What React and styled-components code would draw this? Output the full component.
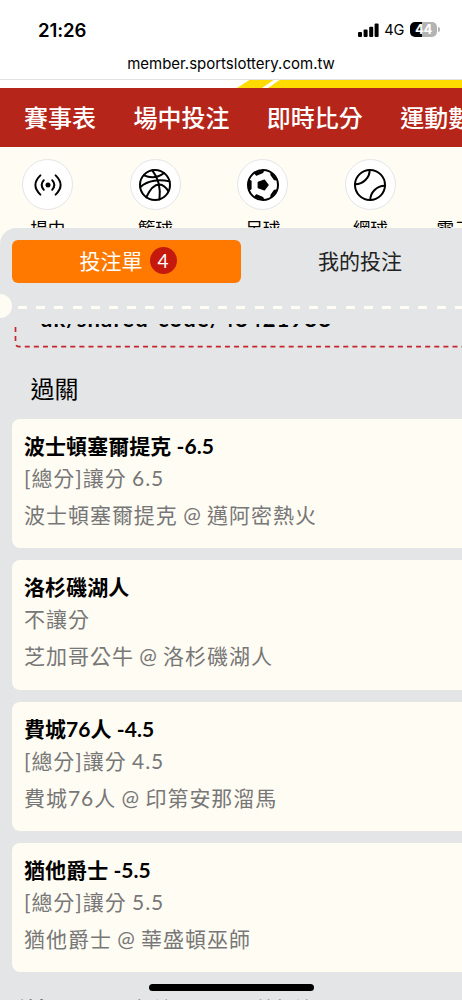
import React from 'react';
import styled, { createGlobalStyle } from 'styled-components';

const GlobalStyle = createGlobalStyle`
  * {
    box-sizing: border-box;
  }
  body {
    margin: 0;
    overflow: hidden;
    background: #fff;
  }
`;

const Screen = styled.div`
  display: flex;
  flex-direction: column;
  position: relative;
  width: 462px;
  height: 1000px;
  overflow: hidden;
  background: #fffcf3;
  color: #000;
  font-family: Lato, 'Noto Sans CJK TC', sans-serif;
  white-space: nowrap;
`;

const StatusBar = styled.header`
  display: flex;
  justify-content: space-between;
  align-items: center;
  flex: none;
  height: 52px;
  padding: 7px 22px 0 38px;
  background: #fff;
  font-family: Inter, sans-serif;
`;

const Clock = styled.span`
  font-size: 18.6px;
  font-weight: 600;
  letter-spacing: -0.1px;
`;

const StatusIcons = styled.div`
  display: flex;
  align-items: center;
  gap: 5.5px;
  font-size: 14.6px;
`;

const Battery = styled.div`
  display: flex;
  align-items: center;
  gap: 1px;
`;

const BatteryBody = styled.span`
  width: 27px;
  height: 15px;
  border-radius: 5px;
  background: linear-gradient(90deg, #000 44%, #b3b3b3 44%);
  color: #fff;
  font-size: 13px;
  font-weight: 700;
  letter-spacing: -0.3px;
  line-height: 15px;
  text-align: center;
`;

const BatteryTip = styled.span`
  width: 2px;
  height: 5px;
  border-radius: 0 2px 2px 0;
  background: #b3b3b3;
`;

const AddressBar = styled.div`
  flex: none;
  height: 28px;
  border-bottom: 1px solid #e2e2e2;
  background: #fff;
  font-family: Inter, sans-serif;
  font-size: 15px;
  line-height: 23px;
  text-align: center;
`;

const Stripe = styled.svg`
  display: block;
  flex: none;
  background: #fff;
`;

const NavBar = styled.nav`
  display: flex;
  align-items: center;
  gap: 37.4px;
  flex: none;
  height: 59px;
  padding: 0 0 3px 24px;
  background: #b6251a;
  color: #fff;
  font-size: 24px;
  font-weight: 500;
`;

const NavItem = styled.span`
  flex: none;
`;

const Sports = styled.div`
  display: flex;
  flex: none;
  height: 81px;
  padding-top: 11px;
  border-top: 1px solid #fff;
  overflow: hidden;
`;

const Sport = styled.div`
  display: flex;
  flex-direction: column;
  align-items: center;
  flex: none;
  width: 107.5px;
  margin-left: ${({ $shift = 0 }) => $shift}px;
`;

const SportIcon = styled.span`
  display: flex;
  justify-content: center;
  align-items: center;
  flex: none;
  width: 51px;
  height: 51px;
  border: 1.5px solid ${({ $empty }) => ($empty ? 'transparent' : '#e4e5e8')};
  border-radius: 50%;
  background: ${({ $empty }) => ($empty ? 'transparent' : '#fff')};
`;

const SportName = styled.span`
  margin-top: 4.5px;
  font-size: 17.6px;
  line-height: 27px;
`;

const Sheet = styled.section`
  display: flex;
  flex-direction: column;
  flex: 1;
  min-height: 0;
  overflow: hidden;
  border-radius: 16px 0 0 0;
  background: #e4e5e7;
`;

const Tabs = styled.div`
  display: flex;
  align-items: center;
  flex: none;
  height: 66px;
  padding-left: 12px;
`;

const Tab = styled.div`
  display: flex;
  justify-content: center;
  align-items: center;
  gap: 7px;
  flex: none;
  width: ${({ $active }) => ($active ? '229px' : '238px')};
  height: 43px;
  padding: ${({ $active }) => ($active ? '0 0 2px 3px' : '0 0 3px')};
  border-radius: 6px;
  background: ${({ $active }) => ($active ? '#ff7900' : 'transparent')};
  color: ${({ $active }) => ($active ? '#fff' : '#222')};
  font-size: 21px;
`;

const Badge = styled.span`
  width: 27px;
  height: 27px;
  border-radius: 50%;
  background: #c5190d;
  font-size: 19px;
  line-height: 27px;
  text-align: center;
`;

const Perforation = styled.div`
  display: flex;
  align-items: center;
  gap: 6px;
  flex: none;
  height: 24px;
`;

const Notch = styled.span`
  width: 12px;
  height: 24px;
  border-radius: 0 12px 12px 0;
  background: #fffcf3;
`;

const DashLine = styled.span`
  flex: 1;
  height: 3px;
  margin-top: 3px;
  background: repeating-linear-gradient(90deg, #fffcf3 0 9px, transparent 9px 18.2px);
`;

const ShareClip = styled.div`
  display: flex;
  align-items: flex-end;
  flex: none;
  height: 25px;
  margin: 6px 0 0 14px;
  overflow: hidden;
`;

const ShareBox = styled.div`
  position: relative;
  flex: none;
  width: 470px;
  height: 60px;
  padding: 18px 0 0 26px;
  font-size: 22px;
  font-weight: 700;
  letter-spacing: 1.1px;
  line-height: 24px;
`;

const DashedFrame = styled.svg`
  position: absolute;
  inset: 0;
`;

const SectionTitle = styled.h2`
  flex: none;
  height: 70px;
  margin: 0;
  padding: 5px 0 0 30.5px;
  font-size: 24px;
  font-weight: 400;
  line-height: 70px;
`;

const Bets = styled.div`
  display: flex;
  flex-direction: column;
  gap: 12px;
  flex: none;
  padding-left: 12px;
`;

const BetCard = styled.article`
  height: 129.3px;
  padding: 11px 12px;
  border-radius: 8px 0 0 8px;
  background: #fffcf3;
`;

const BetTitle = styled.div`
  height: 32px;
  font-size: 21px;
  font-weight: 700;
  letter-spacing: 0.06px;
  line-height: 32px;
`;

const BetLine = styled.div`
  height: ${({ $tall }) => ($tall ? '40px' : '33px')};
  color: #777;
  font-size: 21px;
  letter-spacing: 0.97px;
  line-height: ${({ $tall }) => ($tall ? '40px' : '32px')};
  word-spacing: -1px;
`;

const Summary = styled.div`
  display: flex;
  gap: 43px;
  flex: none;
  margin-top: 22px;
  padding-left: 14px;
  font-size: 19.5px;
  line-height: 30px;
`;

const SummaryTab = styled.span`
  color: ${({ $active }) => ($active ? '#222' : '#777')};
  font-weight: ${({ $active }) => ($active ? 700 : 400)};
`;

const HomeIndicator = styled.div`
  position: absolute;
  left: 149px;
  bottom: 9px;
  width: 165px;
  height: 7px;
  border-radius: 4px;
  background: #000;
`;

const SignalIcon = () => (
  <svg width='21' height='14' viewBox='0 0 21 14'>
    <rect x='0' y='9' width='4' height='5' rx='1' />
    <rect x='5.6' y='6.6' width='4' height='7.4' rx='1' />
    <rect x='11.2' y='3.8' width='4' height='10.2' rx='1' />
    <rect x='16.6' y='0.5' width='4' height='13.5' rx='1' />
  </svg>
);

const iconProps = {
  width: 34,
  height: 34,
  viewBox: '0 0 34 34',
  fill: 'none',
  stroke: '#000',
  strokeWidth: 2,
  strokeLinecap: 'round',
};

const LiveIcon = () => (
  <svg {...iconProps}>
    <circle cx='17' cy='17' r='2.5' fill='#000' stroke='none' />
    <path d='M12.8 12.2Q8.6 17 12.8 21.8M21.2 12.2Q25.4 17 21.2 21.8' />
    <path d='M9.4 7.4Q-.6 17 9.4 26.6M24.6 7.4Q34.6 17 24.6 26.6' />
  </svg>
);

const BasketballIcon = () => (
  <svg {...iconProps}>
    <circle cx='17' cy='17' r='15' />
    <path d='M14.3 2.3Q23.5 14 21.5 31.4' />
    <path d='M6 7.4Q16.5 12.2 26.2 5' />
    <path d='M2.4 19C10 12 22 11.2 31.5 13.4' />
    <path d='M8.2 29.4C11.5 22 16 16.4 21.4 16.4Q26.5 16.8 30.2 23' />
  </svg>
);

const SoccerIcon = () => (
  <svg {...iconProps}>
    <circle cx='17' cy='17' r='15' />
    <path
      d='M12.2 14.2L18.4 12L22.2 17L18.4 22L12.2 19.8ZM2.6 12L5 13V21L2.6 22ZM8.6 5.2L17.6 2.4L16.8 4.4L10.4 7.2ZM25 4.8L30.4 11.8L28.4 11.6L25 6.8ZM25 29.2L30.4 22.2L28.4 22.4L25 27.2ZM8.6 28.8L17.6 31.6L16.8 29.6L10.4 26.8Z'
      fill='#000'
      strokeWidth='1.2'
      strokeLinejoin='round'
    />
  </svg>
);

const TennisIcon = () => (
  <svg {...iconProps}>
    <circle cx='17' cy='17' r='15' />
    <path d='M16.6 2C17 9 10.5 16.2 2.2 16.2M17.4 32C17 25 23.5 17.8 31.8 17.8' />
  </svg>
);

const sports = [
  { name: '場中', Icon: LiveIcon, shift: -6 },
  { name: '籃球', Icon: BasketballIcon },
  { name: '足球', Icon: SoccerIcon },
  { name: '網球', Icon: TennisIcon },
  { name: '電子競技', shift: -6 },
];

const bets = [
  {
    title: '波士頓塞爾提克 -6.5',
    market: '[總分]讓分 6.5',
    game: '波士頓塞爾提克 @ 邁阿密熱火',
  },
  { title: '洛杉磯湖人', market: '不讓分', game: '芝加哥公牛 @ 洛杉磯湖人' },
  {
    title: '費城76人 -4.5',
    market: '[總分]讓分 4.5',
    game: '費城76人 @ 印第安那溜馬',
  },
  {
    title: '猶他爵士 -5.5',
    market: '[總分]讓分 5.5',
    game: '猶他爵士 @ 華盛頓巫師',
  },
];

const App = () => {
  return (
    <>
      <GlobalStyle />
      <Screen>
        <StatusBar>
          <Clock>21:26</Clock>
          <StatusIcons>
            <SignalIcon />
            <span>4G</span>
            <Battery>
              <BatteryBody>44</BatteryBody>
              <BatteryTip />
            </Battery>
          </StatusIcons>
        </StatusBar>
        <AddressBar>member.sportslottery.com.tw</AddressBar>
        <Stripe width='462' height='8' viewBox='0 0 462 8'>
          <path d='M251-1H275L262 8H237ZM281-1H462V8H268Z' fill='#ffdc00' />
        </Stripe>
        <NavBar>
          {['賽事表', '場中投注', '即時比分', '運動數據'].map((item) => (
            <NavItem key={item}>{item}</NavItem>
          ))}
        </NavBar>
        <Sports>
          {sports.map(({ name, Icon, shift }) => (
            <Sport key={name} $shift={shift}>
              <SportIcon $empty={!Icon}>{Icon && <Icon />}</SportIcon>
              <SportName>{name}</SportName>
            </Sport>
          ))}
        </Sports>
        <Sheet>
          <Tabs>
            <Tab $active>
              投注單 <Badge>4</Badge>
            </Tab>
            <Tab>我的投注</Tab>
          </Tabs>
          <Perforation>
            <Notch />
            <DashLine />
          </Perforation>
          <ShareClip>
            <ShareBox>
              <DashedFrame width='470' height='60'>
                <path
                  d='M1.5 38V53.7Q1.5 57.7 5.5 57.7H470'
                  fill='none'
                  stroke='#c5262c'
                  strokeWidth='1.7'
                  strokeDasharray='5 4.1'
                />
              </DashedFrame>
              uk/shared-code/48421988
            </ShareBox>
          </ShareClip>
          <SectionTitle>過關</SectionTitle>
          <Bets>
            {bets.map(({ title, market, game }) => (
              <BetCard key={title}>
                <BetTitle>{title}</BetTitle>
                <BetLine>{market}</BetLine>
                <BetLine $tall>{game}</BetLine>
              </BetCard>
            ))}
          </Bets>
          <Summary>
            <SummaryTab $active>所有項目</SummaryTab>
            <SummaryTab>投注項目</SummaryTab>
            <SummaryTab>總投注項目</SummaryTab>
          </Summary>
        </Sheet>
        <HomeIndicator />
      </Screen>
    </>
  );
};

export default App;
